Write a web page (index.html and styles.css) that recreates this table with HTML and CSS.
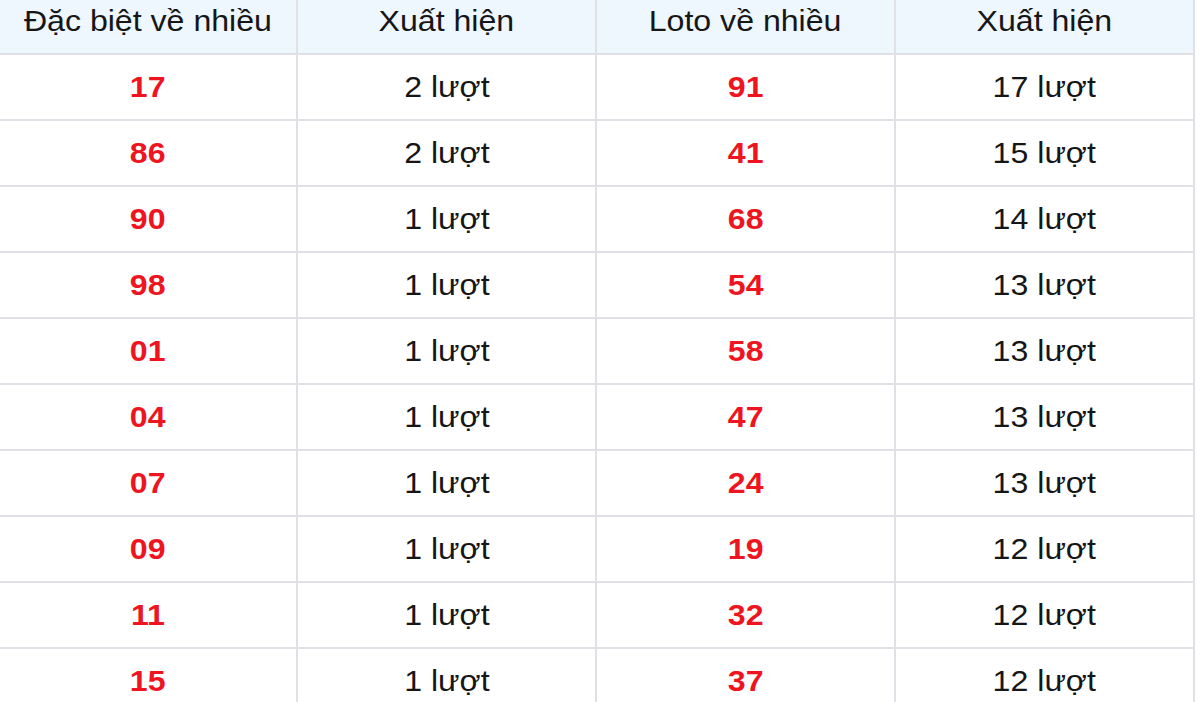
FILE: index.html
```html
<!DOCTYPE html>
<html lang="vi">
<head>
<meta charset="utf-8">
<link rel="stylesheet" href="styles.css">
</head>
<body>
<div class="wrap">
<table class="stats">
  <thead>
    <tr>
      <th><span class="t">Đặc biệt về nhiều</span></th>
      <th><span class="t">Xuất hiện</span></th>
      <th><span class="t">Loto về nhiều</span></th>
      <th><span class="t">Xuất hiện</span></th>
    </tr>
  </thead>
  <tbody>
    <tr><td class="num"><span class="t">17</span></td><td><span class="t">2 lượt</span></td><td class="num"><span class="t">91</span></td><td><span class="t">17 lượt</span></td></tr>
    <tr><td class="num"><span class="t">86</span></td><td><span class="t">2 lượt</span></td><td class="num"><span class="t">41</span></td><td><span class="t">15 lượt</span></td></tr>
    <tr><td class="num"><span class="t">90</span></td><td><span class="t">1 lượt</span></td><td class="num"><span class="t">68</span></td><td><span class="t">14 lượt</span></td></tr>
    <tr><td class="num"><span class="t">98</span></td><td><span class="t">1 lượt</span></td><td class="num"><span class="t">54</span></td><td><span class="t">13 lượt</span></td></tr>
    <tr><td class="num"><span class="t">01</span></td><td><span class="t">1 lượt</span></td><td class="num"><span class="t">58</span></td><td><span class="t">13 lượt</span></td></tr>
    <tr><td class="num"><span class="t">04</span></td><td><span class="t">1 lượt</span></td><td class="num"><span class="t">47</span></td><td><span class="t">13 lượt</span></td></tr>
    <tr><td class="num"><span class="t">07</span></td><td><span class="t">1 lượt</span></td><td class="num"><span class="t">24</span></td><td><span class="t">13 lượt</span></td></tr>
    <tr><td class="num"><span class="t">09</span></td><td><span class="t">1 lượt</span></td><td class="num"><span class="t">19</span></td><td><span class="t">12 lượt</span></td></tr>
    <tr><td class="num"><span class="t">11</span></td><td><span class="t">1 lượt</span></td><td class="num"><span class="t">32</span></td><td><span class="t">12 lượt</span></td></tr>
    <tr><td class="num"><span class="t">15</span></td><td><span class="t">1 lượt</span></td><td class="num"><span class="t">37</span></td><td><span class="t">12 lượt</span></td></tr>
  </tbody>
</table>
</div>
</body>
</html>
```
FILE: styles.css
```css
html, body {
  margin: 0;
  padding: 0;
  background: #fff;
  overflow: hidden;
}
.wrap {
  width: 1200px;
  height: 702px;
  overflow: hidden;
}
.stats {
  border-collapse: collapse;
  table-layout: fixed;
  width: 1198px;
  margin: -13px 0 0 -3px;
  font-family: "Liberation Sans", Arial, sans-serif;
  font-size: 30px;
  color: #161616;
}
.stats th, .stats td {
  border: 2px solid #e0e0e6;
  height: 64px;
  padding: 0;
  text-align: center;
  vertical-align: middle;
}
.stats th {
  background: #eef6fe;
  font-weight: normal;
}
.stats .t {
  display: inline-block;
  transform: scaleX(1.07);
  white-space: nowrap;
}
.stats td.num {
  color: #ee1520;
  font-weight: bold;
}
```
